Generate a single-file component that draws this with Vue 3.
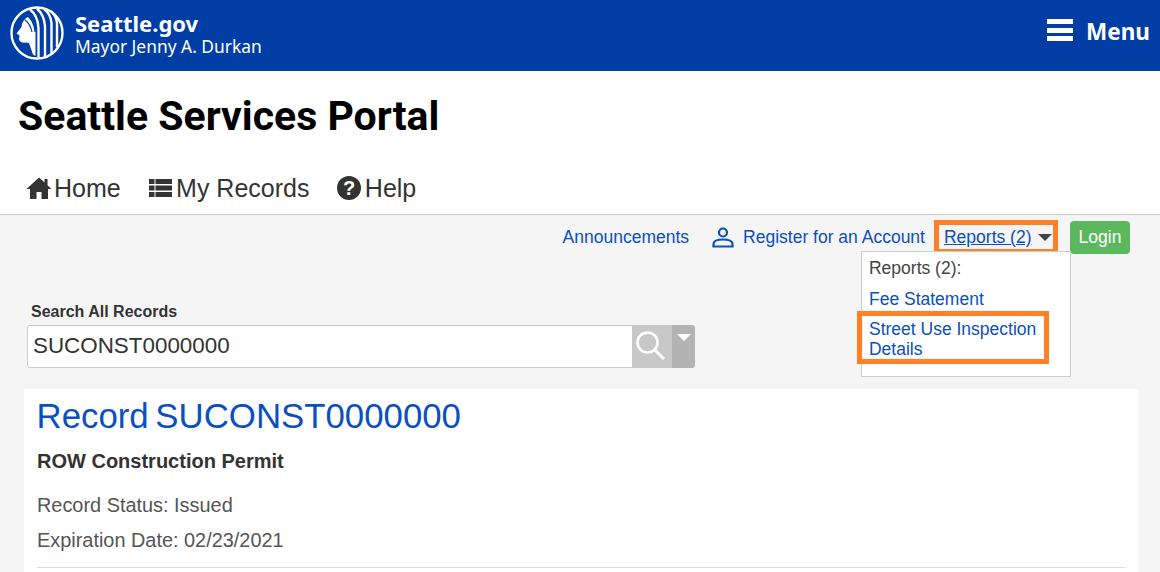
<script setup>
const navItems = [
  { label: 'Home', icon: 'home' },
  { label: 'My Records', icon: 'list' },
  { label: 'Help', icon: 'help' },
]
</script>

<template>
  <div class="page">
    <header class="topbar">
      <div class="brand">
        <svg class="seal" viewBox="0 0 54 54">
          <circle cx="27" cy="27" r="25.500" fill="#003da5" stroke="#fff" stroke-width="2.400" />
          <path d="M18 11C14 13 12 17 11.500 21L6.500 27.500 9.500 29.500 9 33.500C10 36.500 13 37 16 36.500L19 37 23 48.500 25.500 50V26C25 19 22 14 18 11z" fill="#fff" />
          <path d="M17 9C22 13 24.500 19 25 26M15 14C19 17 21 21 22 26" fill="none" stroke="#003da5" stroke-width="1.200" />
          <path d="M20 3.500C26 8 28 14 28.500 22V51M27 2.500C32 7 34.500 13 35 20V51M34 3C38 6 41 11 41.500 17V49M41 5C44 8 46.500 12 47 17V41" fill="none" stroke="#fff" stroke-width="2.400" />
        </svg>
        <div class="brand-text">
          <div class="brand-name">Seattle.gov</div>
          <div class="brand-sub">Mayor Jenny A. Durkan</div>
        </div>
      </div>
      <div class="menu">
        <span class="burger"><i></i><i></i><i></i></span>
        <span>Menu</span>
      </div>
    </header>

    <div class="title-band">
      <h1>Seattle Services Portal</h1>
      <nav class="mainnav">
        <a v-for="item in navItems" :key="item.label" class="nav-item">
          <svg v-if="item.icon === 'home'" class="nav-icon" viewBox="0 0 26 24">
            <path d="M13 1.500 18.500 6.500V3h3v6.300L25.500 13H22v10h-6.500v-7h-5v7H4V13H.5z" fill="#333" />
          </svg>
          <svg v-else-if="item.icon === 'list'" class="nav-icon" viewBox="0 0 26 24">
            <path d="M1 3h5.500v5H1zM7.500 3H24v5H7.500zM1 9.500h5.500v5H1zM7.500 9.500H24v5H7.500zM1 16h5.500v5H1zM7.500 16H24v5H7.500z" fill="#333" />
          </svg>
          <svg v-else class="nav-icon" viewBox="0 0 26 24">
            <circle cx="12" cy="12" r="12" fill="#333" />
            <text x="12" y="19" text-anchor="middle" class="help-mark">?</text>
          </svg>
          <span>{{ item.label }}</span>
        </a>
      </nav>
    </div>

    <main class="content">
      <div class="toplinks">
        <a class="link">Announcements</a>
        <a class="link register">
          <svg class="user-icon" viewBox="0 0 22 22">
            <circle cx="11" cy="6.500" r="4" fill="none" stroke="#0b4fc0" stroke-width="2.200" />
            <path d="M1.500 20.500v-2.500c0-3 3-4.500 9.500-4.500s9.500 1.500 9.500 4.500v2.500z" fill="none" stroke="#0b4fc0" stroke-width="2.200" />
          </svg>
          Register for an Account
        </a>
        <div class="reports">
          <a class="link reports-link">Reports (2)</a>
          <span class="caret"></span>
          <div class="reports-menu">
            <div class="menu-head">Reports (2):</div>
            <a class="link menu-link">Fee Statement</a>
            <a class="link menu-link menu-link--marked">Street Use Inspection Details</a>
          </div>
        </div>
        <button class="login">Login</button>
      </div>

      <div class="search-label">Search All Records</div>
      <div class="search">
        <div class="search-value">SUCONST0000000</div>
        <div class="search-btn">
          <svg class="search-icon" viewBox="0 0 32 32" width="32" height="32">
            <circle cx="13.500" cy="13.500" r="10" fill="none" stroke="#fff" stroke-width="2.600" />
            <path d="M21 21 30 30" stroke="#fff" stroke-width="3" />
          </svg>
        </div>
        <div class="search-drop"><span></span></div>
      </div>

      <section class="card">
        <h2 class="record-title"><span>Record</span> <span>SUCONST0000000</span></h2>
        <div class="permit">ROW Construction Permit</div>
        <div class="meta">Record Status: Issued</div>
        <div class="meta meta--second">Expiration Date: 02/23/2021</div>
        <hr class="rule" />
      </section>
    </main>
  </div>
</template>

<style>
html, body {
  margin: 0;
  overflow: hidden;
}
</style>

<style scoped>
.page {
  width: 1160px;
  height: 572px;
  overflow: hidden;
  background: #fff;
  font-family: "Liberation Sans", Arial, sans-serif;
  color: #333;
}

.topbar {
  height: 71px;
  background: #003da5;
  color: #fff;
  display: flex;
  justify-content: space-between;
  align-items: center;
  padding: 0 10px;
  box-sizing: border-box;
  font-family: "Noto Sans", sans-serif;
}

.brand {
  display: flex;
  align-items: center;
  gap: 11px;
}

.seal {
  width: 54px;
  height: 54px;
  margin-top: -5px;
}

.brand-text {
  margin-top: -5px;
}

.brand-name {
  font-size: 22px;
  font-weight: 700;
  line-height: 26px;
}

.brand-sub {
  font-size: 17.400px;
  line-height: 21px;
}

.menu {
  display: flex;
  align-items: center;
  gap: 13px;
  font-size: 22.500px;
  font-weight: 700;
  margin-top: -8px;
}

.burger {
  display: flex;
  flex-direction: column;
  gap: 3.500px;
  width: 26px;
  margin-top: -3px;
}

.burger i {
  display: block;
  height: 5px;
  background: #fff;
}

.title-band {
  height: 144px;
  box-sizing: border-box;
  border-bottom: 1px solid #ccc;
  padding: 20px 18px 0;
}

h1 {
  margin: 0;
  font-family: Roboto, "Noto Sans", sans-serif;
  font-size: 41px;
  line-height: 50px;
  font-weight: 700;
  color: #000;
}

.mainnav {
  display: flex;
  gap: 27.400px;
  margin-top: 32px;
  padding-left: 8px;
}

.nav-item {
  display: flex;
  align-items: center;
  gap: 2px;
  font-size: 25px;
  line-height: 30px;
  color: #333;
}

.nav-icon {
  width: 26px;
  height: 24px;
  flex: none;
}

.help-mark {
  font-family: "Liberation Sans", sans-serif;
  font-size: 20px;
  font-weight: 700;
  fill: #fff;
}

.content {
  height: 357px;
  background: #f5f5f5;
  padding: 5px 30px 0 24px;
  box-sizing: border-box;
}

.toplinks {
  display: flex;
  justify-content: flex-end;
  align-items: flex-start;
  height: 34px;
  font-size: 17.500px;
  line-height: 34px;
}

.link {
  color: #0b4fc0;
}

.register {
  display: flex;
  align-items: center;
  gap: 9px;
  margin-left: 23px;
}

.user-icon {
  width: 22px;
  height: 22px;
}

.reports {
  position: relative;
  display: flex;
  align-items: center;
  margin-left: 9px;
  margin-right: 12px;
  height: 34px;
  padding: 0 1.500px 0 5px;
  border: 5px solid #ff7f27;
  box-sizing: border-box;
}

.reports-link {
  text-decoration: underline;
}

.caret {
  width: 0;
  height: 0;
  margin-left: 6px;
  margin-top: 1px;
  border-left: 7px solid transparent;
  border-right: 7px solid transparent;
  border-top: 7px solid #444;
}

.reports-menu {
  position: absolute;
  z-index: 2;
  left: -78px;
  top: 26px;
  width: 210px;
  height: 126px;
  background: #fff;
  border: 1px solid #ccc;
  box-sizing: border-box;
  padding: 5px 7px;
  font-size: 17.500px;
}

.menu-head {
  line-height: 22px;
  color: #444;
}

.menu-link {
  display: block;
  margin-top: 10px;
  line-height: 20px;
  width: 185px;
}

.menu-link--marked {
  position: relative;
}

.menu-link--marked::after {
  content: "";
  position: absolute;
  left: -12px;
  top: -8px;
  width: 192px;
  height: 53px;
  border: 5px solid #ff7f27;
  box-sizing: border-box;
}

.login {
  width: 60px;
  height: 33px;
  margin-top: 1px;
  border: 0;
  border-radius: 4px;
  background: #5cb85c;
  color: #fff;
  font: 17.500px "Liberation Sans", Arial, sans-serif;
  padding: 0;
}

.search-label {
  margin: 48px 0 0 7px;
  font-size: 16px;
  line-height: 20px;
  font-weight: 700;
}

.search {
  display: flex;
  width: 668px;
  height: 43px;
  margin: 3px 0 0 3px;
  box-sizing: border-box;
  border: 1px solid #ccc;
  border-radius: 3px;
  background: #fff;
}

.search-value {
  flex: 1;
  padding-left: 5px;
  font-size: 22.400px;
  line-height: 39px;
}

.search-btn {
  width: 40px;
  background: #c8c8c8;
  display: flex;
  align-items: center;
  justify-content: center;
  margin-top: -1px;
  margin-bottom: -1px;
}

.search-icon {
  margin: 0 4px 4px 0;
}

.search-drop {
  width: 23px;
  background: #b3b3b3;
  margin: -1px -1px -1px 0;
  border-radius: 0 3px 3px 0;
}

.search-drop span {
  display: block;
  width: 0;
  margin: 9px auto 0;
  border-left: 7px solid transparent;
  border-right: 7px solid transparent;
  border-top: 7px solid #fff;
}

.card {
  margin-top: 21px;
  width: 1114px;
  height: 190px;
  background: #fff;
  padding: 6px 13px 0;
  box-sizing: border-box;
}

.record-title {
  margin: 0 0 0 -0.500px;
  font-size: 34.800px;
  font-weight: 400;
  line-height: 42px;
  color: #0b4fc0;
  word-spacing: -3px;
}

.permit {
  margin-top: 12px;
  font-size: 20px;
  line-height: 24px;
  font-weight: 700;
}

.meta {
  margin-top: 20px;
  font-size: 19.900px;
  line-height: 24px;
  color: #555;
}

.meta--second {
  margin-top: 11px;
}

.rule {
  margin: 15px 0 0;
  width: 1088px;
  border: 0;
  border-top: 1px solid #ddd;
}
</style>
